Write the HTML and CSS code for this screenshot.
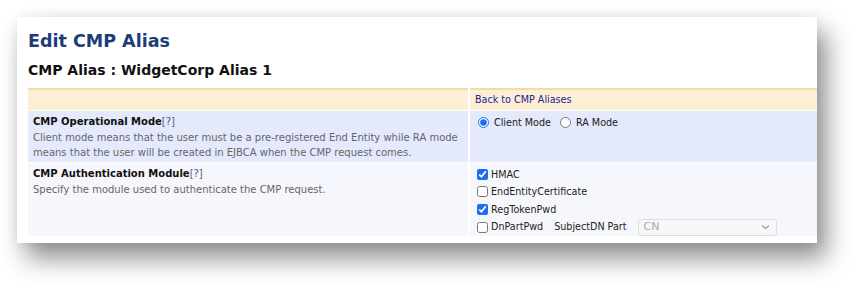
FILE: index.html
```html
<!DOCTYPE html>
<html lang="en">
<head>
  <meta charset="UTF-8" />
  <title>Edit CMP Alias</title>
  <link rel="stylesheet" href="styles.css">
</head>
<body>
  <div class="panel">
    <h1>Edit CMP Alias</h1>
    <h2>CMP Alias : WidgetCorp Alias 1</h2>

    <div class="grid">
      <div class="cell head"></div>
      <div class="cell head"><a href="#" class="back">Back to CMP Aliases</a></div>

      <div class="cell odd">
        <div class="label">CMP Operational Mode<span class="help">[<a href="#">?</a>]</span></div>
        <div class="desc">Client mode means that the user must be a pre-registered End Entity while RA mode means that the user will be created in EJBCA when the CMP request comes.</div>
      </div>
      <div class="cell odd opts">
        <div class="line">
          <label><input type="radio" name="mode" checked>Client Mode</label>
          <label><input type="radio" name="mode">RA Mode</label>
        </div>
      </div>

      <div class="cell even">
        <div class="label">CMP Authentication Module<span class="help">[<a href="#">?</a>]</span></div>
        <div class="desc">Specify the module used to authenticate the CMP request.</div>
      </div>
      <div class="cell even opts checks">
        <label><input type="checkbox" checked>HMAC</label>
        <label><input type="checkbox">EndEntityCertificate</label>
        <label><input type="checkbox" checked>RegTokenPwd</label>
        <div class="line">
          <label><input type="checkbox">DnPartPwd</label>
          <span class="part">SubjectDN Part</span>
          <div class="select">CN
            <svg width="9" height="6" viewBox="0 0 9 6"><path d="M1 1.5 L4.5 4.5 L8 1.5" fill="none" stroke="#999" stroke-width="1.2"/></svg>
          </div>
        </div>
      </div>
    </div>
  </div>
</body>
</html>
```

FILE: styles.css
```css
* { margin: 0; padding: 0; box-sizing: border-box; }
html, body { min-height: 291px; }
body {
  background: #fff;
  font-family: "DejaVu Sans", Verdana, sans-serif;
  font-size: 10px;
  color: #222;
  padding: 17px 0 0 17px;
}
.panel {
  width: 800px;
  height: 226px;
  background: #fff;
  padding: 0 0 7px 11px;
  box-shadow: 9px 15px 24px rgba(0, 0, 0, 0.45), 0 0 12px rgba(0, 0, 0, 0.06);
}
h1 {
  font-size: 17.5px;
  color: #1d3c78;
  padding-top: 12px;
  line-height: 24px;
}
h2 {
  font-size: 14px;
  color: #111;
  margin-top: 7px;
  line-height: 20px;
}
.grid {
  display: grid;
  grid-template-columns: 440px 1fr;
  gap: 1px 2px;
  margin-top: 8px;
}
.cell { padding: 3px 5px 4px; line-height: 15.5px; overflow: hidden; }
.head {
  background: #fcefd4;
  border-top: 2px solid #f4dba4;
  height: 22px;
  padding-top: 2px;
}
.odd { background: #e4e9fb; height: 51px; }
.even { background: #f6f7fd; height: 73px; }
.back { color: #23239a; text-decoration: none; font-size: 9.6px; }
.label { font-weight: bold; color: #111; }
.help { font-weight: normal; color: #666; }
.help a { color: #3a4fc0; text-decoration: none; }
.desc { color: #666; }
.opts { font-size: 9.6px; }
.odd.opts { padding-top: 4px; }
.line { display: flex; align-items: center; }
label { display: flex; align-items: center; color: #222; }
input[type="radio"] {
  width: 11px; height: 11px;
  margin: 0 5px 0 3px;
  accent-color: #1a6ff0;
}
.line label + label input[type="radio"] { margin-left: 9px; }
input[type="checkbox"] {
  width: 11px; height: 11px;
  margin: 0 3px 0 2px;
  accent-color: #1a6ff0;
}
.checks { padding-top: 2.5px; line-height: 17.6px; }
.checks label { height: 17.6px; }
.part { margin-left: 11px; }
.select {
  margin-left: 11px;
  width: 139px;
  height: 17px;
  border: 1px solid #ddd;
  border-radius: 3px;
  background: #f8f8fa;
  color: #aaa;
  font-size: 11px;
  padding: 0 6px 0 5px;
  display: flex;
  align-items: center;
  justify-content: space-between;
}
```
